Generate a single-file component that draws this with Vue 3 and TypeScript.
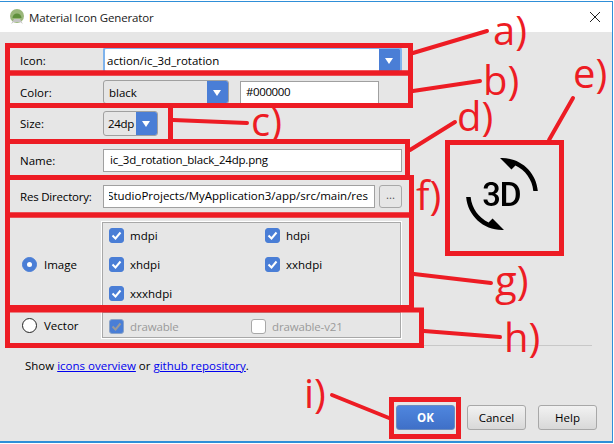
<script setup lang="ts">
interface Note { text: string; x: number; y: number }
const notes: Note[] = [
  { text: 'a)', x: 493, y: 9.5 },
  { text: 'b)', x: 483, y: 59.5 },
  { text: 'c)', x: 251, y: 100.5 },
  { text: 'd)', x: 457, y: 95.5 },
  { text: 'e)', x: 573, y: 52.5 },
  { text: 'f)', x: 416, y: 174.5 },
  { text: 'g)', x: 495, y: 259.5 },
  { text: 'h)', x: 504, y: 316.5 },
  { text: 'i)', x: 304, y: 372.5 },
]
const boxes = [
  [7.5, 45.5, 403, 27.5],
  [7.5, 73, 403, 32.5],
  [7.5, 105.5, 163, 36],
  [7.5, 141.5, 400, 36],
  [7.5, 177.5, 404, 37.5],
  [7.5, 215, 404, 92.5],
  [7.5, 310, 414, 35.5],
  [447.5, 142.5, 114, 111],
  [391.5, 399.5, 67, 37],
]
const lines = [
  [413, 53, 487, 31],
  [413, 91, 480, 81],
  [173, 120, 247, 123],
  [410, 150, 455, 122],
  [549, 140, 573, 98],
  [414, 274, 491, 283],
  [424, 331, 500, 337],
  [332, 395, 389, 418],
]
const densities = [
  { label: 'mdpi' }, { label: 'hdpi' }, { label: 'xhdpi' }, { label: 'xxhdpi' }, { label: 'xxxhdpi' },
]
</script>

<template>
  <div class="screen">
    <div class="dialog">
      <header class="title">
        <svg class="app-icon" width="16" height="16" viewBox="0 0 16 16">
          <circle cx="8" cy="7" r="7" fill="#9ab77a" />
          <path d="M3.5 9a4.5 4.5 0 0 1 9 0z" fill="#5f8f3c" />
          <path d="M2 15l3-5h6l3 5-3-2H5z" fill="#c4c4c4" />
        </svg>
        <span>Material Icon Generator</span>
        <svg class="close" width="10" height="10" viewBox="0 0 10 10">
          <path d="M0 0l10 10M10 0L0 10" stroke="#222" stroke-width="1" fill="none" />
        </svg>
      </header>

      <main class="body">
        <div class="form">
          <div class="row row-icon">
            <label>Icon:</label>
            <div class="combo focus wide">
              <span class="value">action/ic_3d_rotation</span>
              <span class="arrow" />
            </div>
          </div>
          <div class="row row-color">
            <label>Color:</label>
            <div class="combo color">
              <span class="value">black</span>
              <span class="arrow" />
            </div>
            <div class="field hex">#000000</div>
          </div>
          <div class="row row-size">
            <label>Size:</label>
            <div class="combo size">
              <span class="value">24dp</span>
              <span class="arrow" />
            </div>
          </div>
          <div class="row row-name">
            <label>Name:</label>
            <div class="field wide name">ic_3d_rotation_black_24dp.png</div>
          </div>
          <div class="row row-res">
            <label class="tight">Res Directory:</label>
            <div class="field res"><div class="clip"><span>StudioProjects/MyApplication3/app/src/main/res</span></div></div>
            <div class="dots">...</div>
          </div>
          <div class="row row-image">
            <div class="choice">
              <span class="radio on" />
              <span>Image</span>
            </div>
            <div class="panel grid">
              <div v-for="d in densities" :key="d.label" class="check">
                <span class="box on">
                  <svg width="11" height="9" viewBox="0 0 11 9"><path d="M1.5 4.5l3 3 5-6" stroke="#fff" stroke-width="2" fill="none" /></svg>
                </span>
                <span>{{ d.label }}</span>
              </div>
            </div>
          </div>
          <div class="row row-vector">
            <div class="choice">
              <span class="radio" />
              <span>Vector</span>
            </div>
            <div class="panel flat">
              <div class="check disabled first">
                <span class="box on dim">
                  <svg width="11" height="9" viewBox="0 0 11 9"><path d="M1.5 4.5l3 3 5-6" stroke="#9a9a9a" stroke-width="2" fill="none" /></svg>
                </span>
                <span>drawable</span>
              </div>
              <div class="check disabled">
                <span class="box" />
                <span>drawable-v21</span>
              </div>
            </div>
          </div>
          <hr class="rule" />
          <p class="links">
            Show <a href="#">icons overview</a> or <a href="#">github repository</a>.
          </p>
        </div>

        <div class="preview">
          <svg width="72" height="72" viewBox="0 0 24 24">
            <path d="M7.52 21.48C4.25 19.94 1.91 16.76 1.55 13H.05C.56 19.16 5.71 24 12 24l.66-.03-3.81-3.81-1.33 1.32zm.89-6.52c-.19 0-.37-.03-.52-.08-.16-.06-.29-.13-.4-.24-.11-.1-.2-.22-.26-.37-.06-.14-.09-.3-.09-.47h-1.3c0 .36.07.68.21.95.14.27.33.5.56.69.24.18.51.32.82.41.3.1.62.15.96.15.37 0 .72-.05 1.03-.15.32-.1.6-.25.83-.44s.42-.43.55-.72c.13-.29.2-.61.2-.97 0-.19-.02-.38-.07-.56-.05-.18-.12-.35-.23-.51-.1-.16-.24-.3-.4-.43-.17-.13-.37-.23-.61-.31.2-.09.37-.2.52-.33.15-.13.27-.27.37-.42.1-.15.17-.3.22-.46.05-.16.07-.32.07-.48 0-.36-.06-.68-.18-.96-.12-.28-.29-.51-.51-.69-.2-.19-.47-.33-.77-.43C9.1 8.05 8.76 8 8.39 8c-.36 0-.69.05-1 .16-.3.11-.57.26-.79.45-.21.19-.38.41-.51.67-.12.26-.18.54-.18.85h1.3c0-.17.03-.32.09-.45s.14-.25.25-.34c.11-.09.23-.17.38-.22.15-.05.3-.08.48-.08.4 0 .7.1.89.31.19.2.29.49.29.86 0 .18-.03.34-.08.49-.05.15-.14.27-.25.37-.11.1-.25.18-.41.24-.16.06-.36.09-.58.09H7.5v1.03h.77c.22 0 .42.02.6.07s.33.13.45.23c.12.11.22.24.29.4.07.16.1.35.1.57 0 .41-.12.72-.35.93-.23.23-.55.33-.95.33zm8.55-5.92c-.32-.33-.7-.59-1.14-.77-.43-.18-.92-.27-1.46-.27H12v8h2.3c.55 0 1.06-.09 1.51-.27.45-.18.84-.43 1.16-.76.32-.33.57-.73.74-1.19.17-.47.26-.99.26-1.57v-.4c0-.58-.09-1.1-.26-1.57-.18-.47-.43-.87-.75-1.2zm-.39 3.16c0 .42-.05.79-.14 1.13-.1.33-.24.62-.43.85-.19.23-.43.41-.71.53-.29.12-.62.18-.99.18h-.91V9.12h.97c.72 0 1.27.23 1.64.69.38.46.57 1.12.57 1.99v.4zM12 0l-.66.03 3.81 3.81 1.33-1.33c3.27 1.55 5.61 4.72 5.96 8.48h1.5C23.44 4.84 18.29 0 12 0z" fill="#000" />
          </svg>
        </div>

        <footer class="actions">
          <button class="btn primary">OK</button>
          <button class="btn">Cancel</button>
          <button class="btn">Help</button>
        </footer>
      </main>
    </div>

    <svg class="overlay" width="614" height="444" viewBox="0 0 614 444">
      <rect
        v-for="(b, i) in boxes"
        :key="'b' + i"
        :x="b[0]"
        :y="b[1]"
        :width="b[2]"
        :height="b[3]"
        fill="none"
        stroke="#ed1c24"
        stroke-width="5"
      />
      <line
        v-for="(l, i) in lines"
        :key="'l' + i"
        :x1="l[0]"
        :y1="l[1]"
        :x2="l[2]"
        :y2="l[3]"
        stroke="#ed1c24"
        stroke-width="4"
        stroke-linecap="round"
      />
    </svg>
    <span
      v-for="n in notes"
      :key="n.text"
      class="note"
      :style="{ left: n.x + 'px', top: n.y + 'px' }"
    >{{ n.text }}</span>
  </div>
</template>

<style>
html, body { margin: 0; background: #fff; }
</style>

<style scoped>
.screen {
  position: relative;
  width: 614px;
  height: 444px;
  overflow: hidden;
  padding-top: 1px;
  box-sizing: border-box;
  background: #fff;
  font-family: "Open Sans", "Noto Sans", sans-serif;
  font-size: 11.5px;
  color: #000;
}
.dialog {
  box-sizing: border-box;
  width: 613px;
  height: 442px;
  display: flex;
  flex-direction: column;
  border-top: 1px solid #2f8fd8;
  border-right: 1px solid #2f8fd8;
  border-bottom: 2px solid #2f8fd8;
}
.title {
  height: 30px;
  flex: none;
  display: flex;
  align-items: center;
  padding: 0 12px 0 9px;
  background: #fff;
  font-size: 11.5px;
  letter-spacing: -0.15px;
  color: #1a1a1a;
}
.app-icon { margin-right: 4px; }
.close { margin-left: auto; }
.body {
  flex: 1;
  background: #e6e6e6;
  position: relative;
  display: grid;
  grid-template-columns: 1fr;
}
.form {
  padding: 16px 0 0 20px;
  width: 384px;
}
.row { display: flex; align-items: flex-start; }
.row > label { width: 83px; flex: none; padding-top: 5px; }
.row-name > label, .row-res > label { padding-top: 4px; }
.row-icon { height: 32px; }
.row-color { height: 31px; }
.row-size { height: 38px; }
.row-name { height: 36px; }
.row-res { height: 37px; }
.row-image { height: 90px; }
.row-vector { height: 33px; }
.tight { letter-spacing: -0.2px; }
.combo {
  display: flex;
  box-sizing: border-box;
  border: 1px solid #a0a0a0;
  border-radius: 3px;
  background: #e6e6e6;
  height: 24px;
  overflow: hidden;
}
.combo .value { flex: 1; padding: 4px 0 0 5px; }
.combo .arrow {
  width: 21px;
  flex: none;
  background: #4a7ed6;
  position: relative;
}
.combo .arrow::after {
  content: "";
  position: absolute;
  left: 6px;
  top: 9px;
  border-left: 4.5px solid transparent;
  border-right: 4.5px solid transparent;
  border-top: 6px solid #fff;
}
.combo.focus {
  background: #fff;
  border: 2px solid #7fb3ec;
  height: 26px;
  margin-top: -1px;
}
.combo.focus .value { padding: 4px 0 0 2px; letter-spacing: 0; }
.combo.focus .arrow::after { top: 9px; }
.wide { width: 299px; }
.color { width: 126px; }
.hex { margin-left: 11px; width: 139px; margin-top: 1px; height: 24px; letter-spacing: -0.4px; }
.size { width: 55px; height: 25px; }
.size .value { padding: 4px 0 0 4px; letter-spacing: -0.3px; }
.field {
  box-sizing: border-box;
  height: 23px;
  background: #fff;
  border: 1px solid #a0a0a0;
  padding: 2px 0 0 5px;
  white-space: nowrap;
  overflow: hidden;
}
.name { padding-left: 6px; letter-spacing: -0.2px; }
.res {
  width: 272px;
  padding: 2px 6px 0 5px;
}
.clip {
  overflow: hidden;
  direction: rtl;
}
.clip span { direction: ltr; unicode-bidi: bidi-override; }
.dots {
  box-sizing: border-box;
  margin-left: 4px;
  width: 23px;
  height: 23px;
  border: 1px solid #a8a8a8;
  border-radius: 3px;
  text-align: center;
  color: #555;
  line-height: 17px;
}
.choice {
  width: 82px;
  flex: none;
  display: flex;
  align-items: center;
  gap: 7px;
}
.row-image .choice { height: 84px; }
.row-vector .choice { height: 27px; }
.radio {
  box-sizing: border-box;
  width: 15px;
  height: 15px;
  margin-left: 2px;
  border-radius: 50%;
  border: 1px solid #222;
  background: #fff;
  position: relative;
}
.radio.on { background: #4a7ed6; border-color: #4a7ed6; }
.radio.on::after {
  content: "";
  position: absolute;
  left: 4px;
  top: 4px;
  width: 5px;
  height: 5px;
  border-radius: 50%;
  background: #fff;
}
.panel {
  box-sizing: border-box;
  width: 299px;
  border: 1px solid #a8a8a8;
  outline: 1px solid #fff;
  padding: 5px 6px 0;
}
.grid {
  display: grid;
  grid-template-columns: 156px 1fr;
  grid-auto-rows: 29px;
  height: 90px;
}
.flat {
  display: flex;
  height: 26px;
  padding-top: 6px;
}
.check {
  display: flex;
  align-items: flex-start;
  gap: 6px;
  line-height: 15px;
}
.first { width: 142px; flex: none; }
.disabled { color: #9a9a9a; letter-spacing: -0.15px; }
.box {
  box-sizing: border-box;
  width: 15px;
  height: 15px;
  border: 1px solid #a8a8a8;
  border-radius: 3px;
  background: #fff;
  display: flex;
  align-items: center;
  justify-content: center;
}
.box.on { background: #4a7ed6; border-color: #4a7ed6; }
.box.dim { background: #4a7ed6; border-color: #8aa3c8; }
.rule {
  border: 0;
  border-top: 1px solid #c8c8c8;
  margin: 0 -188px 0 0;
  position: relative;
}
.links { margin: 12px 0 0 5px; line-height: 16px; }
.links a { color: #0000ee; }
.preview {
  position: absolute;
  left: 466px;
  top: 126px;
  line-height: 0;
}
.actions {
  position: absolute;
  right: 15px;
  top: 373px;
  display: flex;
  gap: 12px;
}
.btn {
  box-sizing: border-box;
  width: 59px;
  height: 25px;
  border: 1px solid #a8a8a8;
  border-radius: 3px;
  background: linear-gradient(#f2f2f2, #d8d8d8);
  font: inherit;
  color: #000;
  padding: 0;
}
.btn.primary {
  background: linear-gradient(#4f86de, #3f70c8);
  border-color: #6a8cc0;
  color: #fff;
  font-weight: 700;
}
.overlay { position: absolute; left: 0; top: 0; pointer-events: none; }
.note {
  position: absolute;
  color: #ed1c24;
  font-size: 40px;
  line-height: 1;
  font-family: "Open Sans", sans-serif;
}
</style>
